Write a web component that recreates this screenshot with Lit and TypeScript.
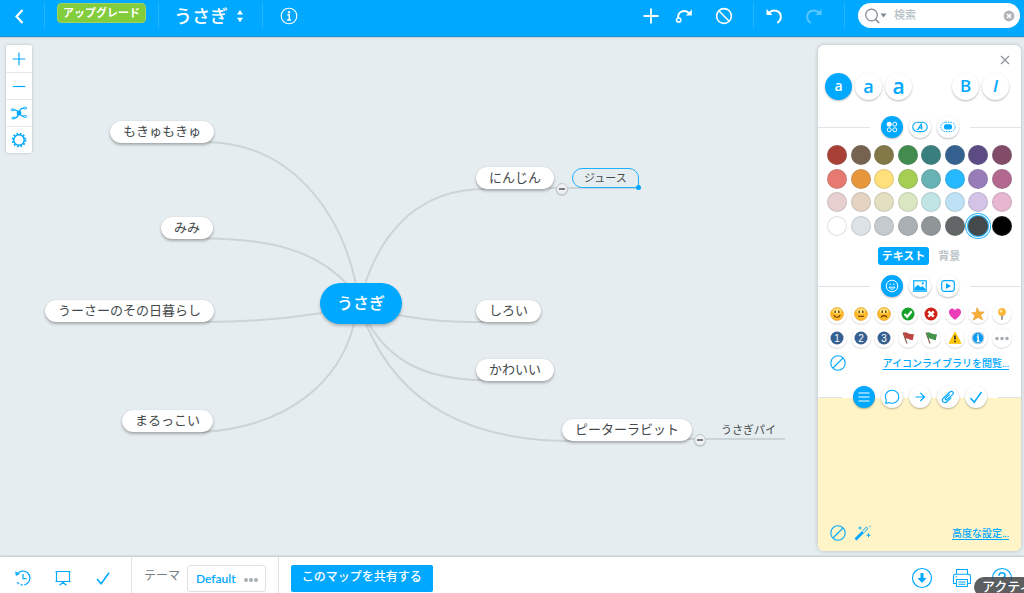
import { LitElement, html, css, svg, TemplateResult } from "lit";
import { customElement, state } from "lit/decorators.js";
import { classMap } from "lit/directives/class-map.js";
import { styleMap } from "lit/directives/style-map.js";

type Drawing = ReturnType<typeof svg>;

const icon = (w: number, h: number, body: Drawing): TemplateResult =>
  html`<svg class="icon" width=${w} height=${h} viewBox="0 0 ${w} ${h}" aria-hidden="true">${body}</svg>`;

const icons = {
  back: icon(10, 16, svg`<path d="M8.500 2L2.500 8.500L8.500 15" stroke-width="2.200"/>`),
  updown: icon(8, 16, svg`<path class="solid" d="M1 6.500L4 2L7 6.500ZM1 9.800L4 14.300L7 9.800Z"/>`),
  info: icon(18, 18, svg`<circle cx="9" cy="9" r="7.800" stroke-width="1.100"/><circle class="solid" cx="9" cy="5.200" r="1.200"/><path d="M7.500 7.800H9.300V12.700M7.200 12.900H11" stroke-width="1.500"/>`),
  add: icon(16, 16, svg`<path d="M8 .5V15.500M.5 8H15.500" stroke-width="1.800"/>`),
  relation: icon(18, 16, svg`<circle cx="3.700" cy="12" r="2.100" stroke-width="1.500"/><path d="M3.300 10C2.300 3.500 9.500 1 14.200 5.200" stroke-width="1.900"/><path class="solid" d="M16.800 1.500V7.600H10.800Z"/>`),
  ban: icon(18, 18, svg`<circle cx="9" cy="9" r="7.400" stroke-width="1.600"/><path d="M3.800 3.800L14.200 14.200" stroke-width="1.500"/>`),
  undo: icon(18, 18, svg`<path d="M4.200 5.600C9 1.200 15.800 4.400 15.800 9.600C15.800 12.500 14.300 14.700 12.300 15.800" stroke-width="1.900"/><path class="solid" d="M1.500 2V8H7.500Z"/>`),
  redo: icon(18, 18, svg`<path d="M13.800 5.600C9 1.200 2.200 4.400 2.200 9.600C2.200 12.500 3.700 14.700 5.700 15.800" stroke-width="1.900"/><path class="solid" d="M16.500 2V8H10.500Z"/>`),
  search: icon(24, 16, svg`<circle cx="7.500" cy="7" r="5.800" stroke-width="1.200"/><path d="M11.500 11.200L15.200 15" stroke-width="1.500"/><path class="solid" d="M16.500 5.500H22.500L19.500 9.500Z"/>`),
  clear: icon(12, 12, svg`<circle class="solid" cx="6" cy="6" r="5.400"/><path d="M4 4L8 8M8 4L4 8" stroke="#fff" stroke-width="1.600"/>`),
  zoomIn: icon(14, 14, svg`<path d="M7 .8V13.200M.8 7H13.200" stroke-width="1.200"/>`),
  zoomOut: icon(14, 14, svg`<path d="M.8 7.500H13.200" stroke-width="1.200"/>`),
  layout: icon(18, 14, svg`<circle class="solid" cx="9" cy="7" r="2.400"/><path d="M3.800 3.800C7 3.500 7.600 5 9 7C10.300 9.300 11 10.500 14 10.500M4.500 12C8 11.800 8 9 9 7C9.500 4 10 2.500 13.800 2.200" stroke-width="1.300"/><rect x="1.200" y="2.900" width="3" height="1.800" rx=".9"/><rect x="2" y="11.200" width="3" height="1.800" rx=".9"/><rect x="13.600" y="1.200" width="3" height="1.800" rx=".9"/><rect x="13.600" y="9.600" width="3" height="1.800" rx=".9"/>`),
  gear: icon(16, 16, svg`<circle cx="8" cy="8" r="5.200" stroke-width="1.500"/><circle cx="8" cy="8" r="6.500" stroke-width="1.700" stroke-dasharray="1.700 1.703"/>`),
  close: icon(10, 10, svg`<path d="M1 1L9 9M9 1L1 9" stroke-width="1.300"/>`),
  shapes: icon(12, 12, svg`<circle class="solid" cx="3.200" cy="3.200" r="2.500"/><circle cx="8.800" cy="3.200" r="2"/><circle cx="3.200" cy="8.800" r="2"/><circle cx="8.800" cy="8.800" r="2"/>`),
  textShape: icon(16, 12, svg`<rect x=".8" y="1.200" width="14.400" height="9.400" rx="4.700" stroke-width="1.100"/><path d="M4.500 8.500H5.800L9.200 3.200L10 8.500M6.300 6.800H9.600" stroke-width="1.200"/>`),
  boundary: icon(16, 12, svg`<rect x=".8" y="1.200" width="14.400" height="9.400" rx="4.700" stroke-dasharray="1.500 1"/><rect class="solid" x="4" y="3.200" width="8" height="5.400" rx="2"/>`),
  smile: icon(14, 14, svg`<circle cx="7" cy="7" r="5.800"/><path d="M4 8.200C5 10.800 9 10.800 10 8.200Z" stroke-width=".9"/><path d="M5.200 4.500V6M8.800 4.500V6" stroke-width="1"/>`),
  image: icon(14, 12, svg`<rect x=".8" y=".8" width="12.400" height="10.400" stroke-width="1.200"/><path class="solid" d="M1.500 10V8L5 4.800L7.500 7.300L9.300 6L12.500 9V10.500H1.500Z"/><circle class="solid" cx="9.800" cy="3.400" r="1.100"/>`),
  video: icon(14, 12, svg`<rect x=".7" y=".7" width="12.600" height="10.600" rx="2.500" stroke-width="1.200"/><path class="solid" d="M5 3V9L10 6Z"/>`),
  none: icon(16, 16, svg`<circle cx="8" cy="8" r="7.200" stroke-width="1.100"/><path d="M13 3L3 13" stroke-width="1.100"/>`),
  lines: icon(12, 10, svg`<path d="M.5 1H11.500M.5 5H11.500M.5 9H11.500" stroke-width="1.100"/>`),
  bubble: icon(16, 16, svg`<path d="M1.800 14.200L2.300 11C-.5 6 3.300 1.200 8 1.200C11.800 1.200 14.800 4 14.800 7.700C14.800 12.500 9.500 15.700 5 13.600Z" stroke-width="1.100"/>`),
  arrow: icon(12, 12, svg`<path d="M1.500 6H10.300M6.300 1.800L10.500 6L6.300 10.200" stroke-width="1.200"/>`),
  clip: icon(14, 14, svg`<path d="M8.700 4.300L4.600 8.400C3.600 9.400 4.900 10.500 5.800 9.600L11.600 4.600C13.600 2.500 11 .2 8.900 2L2.300 8.200C-.3 10.900 3.200 14.200 5.900 11.800L10.300 7.600" stroke-width="1.200"/>`),
  check: icon(14, 14, svg`<path d="M1.500 8L5.200 12.200L12.500 2" stroke-width="1.500"/>`),
  wand: icon(18, 16, svg`<path d="M1.500 14.500L9 7" stroke-width="2.800"/><path d="M8.600 5.800L12.400 2L14 3.600L10.200 7.400" stroke-width="1"/><path d="M6 1.500V4.500M4.500 3H7.500M14.500 8.200V12.200M12.500 10.200H16.500M16 .8V2.200" stroke-width="1"/>`),
  history: icon(18, 18, svg`<path d="M3.200 5A7 7 0 1 1 3.200 13" stroke-width="1.200" stroke-dasharray="27 1.500 2 1.500"/><path class="solid" d="M1 2.500L2 7L6 4.700Z"/><path d="M9 5V9.700H12.500" stroke-width="1.200"/>`),
  screen: icon(18, 16, svg`<path d="M1.500 1.500H16.500M2.500 1.500V11.500M15.500 1.500V11.500M1.500 11.500H16.500M9 11.500V14M9 12.500L5.500 15.200M9 12.500L12.500 15.200" stroke-width="1.200"/>`),
  download: icon(22, 22, svg`<circle cx="11" cy="11" r="9.500" stroke-width="1.200"/><path d="M11 6V13" stroke-width="3"/><path class="solid" d="M6.500 11H15.500L11 16Z"/>`),
  printer: icon(20, 20, svg`<path d="M4.500 6V1.500H15.500V6M4.500 15.500H1.500V8C1.500 6.800 2.200 6.200 3.200 6.200H16.800C17.800 6.200 18.500 6.800 18.500 8V15.500H15.500M4.500 11.500H15.500V18.500H4.500ZM6.500 14H13.500M6.500 16.200H13.500M3.500 8.800H5" stroke-width="1.100"/>`),
  help: icon(22, 22, svg`<circle cx="11" cy="11" r="9.500" stroke-width="1.200"/><path d="M8 8.800C8 4.800 14 4.800 14 8.500C14 10.800 11 10.600 11 13.200M11 14.800V16.500" stroke-width="1.700"/>`),
};

const taskCheck = icon(16, 16, svg`<path d="M2 9L6.200 13.800L14 2.800" stroke-width="1.600"/>`);

const face = (mouth: string): Drawing => svg`<circle cx="8" cy="8" r="6.500" fill="#fdb92a" stroke="#e89b1c" stroke-width=".6"/><ellipse cx="8" cy="5" rx="4.300" ry="2.600" fill="#ffe680" stroke="none"/><path d="M6.200 4.500V7M9.800 4.500V7" stroke="#5b3200" stroke-width="1.300"/><path d=${mouth} stroke="#6b3c00" stroke-width="1.100"/>`;
const digit = (n: string): Drawing => svg`<circle cx="8" cy="8" r="6.500" fill="#35608f" stroke="none"/><text class="digit" x="8" y="11.500" text-anchor="middle">${n}</text>`;
const flag = (color: string): Drawing => svg`<path d="M3 2.500L7 13.500" stroke="#7d5b4a" stroke-width="1.100"/><path d="M3.500 3C6 .8 7.500 4.800 14 4.200L12.800 10C9 10.500 8 7.300 5.600 9Z" fill=${color} stroke="none"/>`;

const stickers: [string, Drawing][] = [
  ["笑顔", face("M4.800 9C6 12 10 12 11.200 9")],
  ["普通", face("M5 10.300H11")],
  ["悲しい", face("M5 11.500C6 9 10 9 11 11.500")],
  ["完了", svg`<circle cx="8" cy="8" r="6.500" fill="#16a02c" stroke="none"/><path d="M4.500 8L7.200 10.800L11.700 5.300" stroke="#fff" stroke-width="2.200"/>`],
  ["中止", svg`<circle cx="8" cy="8" r="6.500" fill="#cf2218" stroke="none"/><path d="M5.300 5.300L10.700 10.700M10.700 5.300L5.300 10.700" stroke="#fff" stroke-width="2.400"/>`],
  ["ハート", svg`<path d="M8 13.800C-1.500 7.500 2.500 2.500 5 2.500C6.800 2.500 7.600 3.700 8 4.600C8.400 3.700 9.200 2.500 11 2.500C13.500 2.500 17.500 7.500 8 13.800Z" fill="#ea3db6" stroke="none"/>`],
  ["星", svg`<path d="M7 1.500L9.300 5.800L14.300 6L10.700 9.300L12.800 14L8.200 11.500L3 14.300L4.900 9.300L1.500 6.800L6 6.200Z" fill="#f6ad35" stroke="#e7952b" stroke-width=".5"/>`],
  ["電球", svg`<circle cx="8" cy="6" r="3.900" fill="#fbb73d" stroke="none"/><circle cx="7" cy="5" r="1.500" fill="#ffe29b" stroke="none"/><path d="M8 9.500V13.800" stroke="#a6a29b" stroke-width="2"/>`],
  ["優先度1", digit("1")],
  ["優先度2", digit("2")],
  ["優先度3", digit("3")],
  ["赤い旗", flag("#b9463f")],
  ["緑の旗", flag("#43934c")],
  ["警告", svg`<path d="M8 2L14 13.300H2Z" fill="#fdc70e" stroke="#fdc70e" stroke-width="1" stroke-linejoin="round"/><path d="M8 5.500V9.500M8 10.800V12.300" stroke="#2b2b2b" stroke-width="1.600"/>`],
  ["情報", svg`<circle cx="8" cy="8" r="5.700" fill="#0a9bf5" stroke="#a9c6dc" stroke-width="1.200"/><path d="M8 4.300V5.700M6.800 7H8.200V11M6.800 11.200H9.500" stroke="#fff" stroke-width="1.400"/>`],
  ["その他", svg`<g fill="#a3aaaf" stroke="none"><circle cx="3" cy="8.500" r="1.700"/><circle cx="8" cy="8.500" r="1.700"/><circle cx="13" cy="8.500" r="1.700"/></g>`],
];

const palette = [
  "#a94036", "#75624f", "#817845", "#428c4f", "#3a7f80", "#34618f", "#5c4c83", "#824b67",
  "#e67a70", "#e6963b", "#ffe07a", "#a5ce52", "#67b2b4", "#26b9ff", "#987cb8", "#b2688f",
  "#e8cfd0", "#e5d4c2", "#e4dfc0", "#dae6c2", "#c1e5e5", "#bfe1f5", "#d4c3e7", "#e7b6d0",
  "#ffffff", "#dce2e6", "#c4cacd", "#aab0b3", "#909598", "#626667", "#44494b", "#000000",
];

interface MapNode { text: string; x: number; y: number; kind: "root" | "topic" | "leaf" | "leaf selected"; }

const nodes: MapNode[] = [
  { text: "うさぎ", x: 320, y: 246, kind: "root" },
  { text: "もきゅもきゅ", x: 110, y: 84, kind: "topic" },
  { text: "みみ", x: 161, y: 180, kind: "topic" },
  { text: "うーさーのその日暮らし", x: 45, y: 263, kind: "topic" },
  { text: "まるっこい", x: 122, y: 373, kind: "topic" },
  { text: "にんじん", x: 476, y: 130, kind: "topic" },
  { text: "しろい", x: 476, y: 263, kind: "topic" },
  { text: "かわいい", x: 476, y: 322, kind: "topic" },
  { text: "ピーターラビット", x: 562, y: 382, kind: "topic" },
  { text: "ジュース", x: 572, y: 131, kind: "leaf selected" },
  { text: "うさぎパイ", x: 710, y: 384, kind: "leaf" },
];

const branches = [
  "M206 105C290 106 340 173 356 247",
  "M206 201.500C270 202 315 213 347 247",
  "M206 285C250 285 290 281 322 276",
  "M202 395C290 390 340 343 354 287",
  "M485 152C420 152 383 193 365 247",
  "M398 278C430 284 450 285 484 285",
  "M369 287C390 323 425 343 484 343",
  "M366 287C400 368 470 404 572 404",
  "M540 151H638",
  "M680 402H785",
];

@customElement("app-root")
export class AppRoot extends LitElement {
  @state() private color = 30;
  @state() private query = "";

  static styles = css`
    :host {
      display: flex; flex-direction: column; position: relative;
      height: 100vh; overflow: hidden; color: #44494b; background: #e6edf0;
      font-family: Lato, "Noto Sans CJK JP", sans-serif; font-size: 12px; line-height: 16px;
    }
    * { box-sizing: border-box; }
    button, input { font: inherit; margin: 0; padding: 0; border: 0; background: none; color: inherit; }
    button { display: flex; align-items: center; justify-content: center; cursor: pointer; }
    .icon { display: block; fill: none; stroke: currentColor; flex: none; }
    .solid { fill: currentColor; stroke: none; }
    .spacer { flex: 1; }

    .top {
      display: flex; align-items: center; height: 37px; padding: 0 4px 5px 0; flex: none;
      color: #fff; background: #00a8ff; border-bottom: 1px solid #1590d6;
      box-shadow: 0 1px 2px rgba(0, 0, 0, .15); z-index: 1;
    }
    .tool { width: 40px; height: 26px; }
    .narrow { width: 26px; }
    .before { margin-right: 9px; }
    .back { width: 44px; padding-right: 6px; }
    .after { margin-right: 10px; }
    .sep { width: 1px; height: 25px; background: #27b4fe; }
    .faded { opacity: .35; }
    .upgrade {
      height: 20px; margin: 3px 12px 0; padding: 0 5px 1px; border: 1px solid #9bd36a; border-radius: 4px;
      background: #83cc3c; font-size: 11px; font-weight: 700; align-self: flex-start;
    }
    .title { gap: 8px; padding: 0 18px 0 15px; font-size: 18px; line-height: 26px; font-weight: 500; }
    .info { width: 52px; }
    .search {
      display: flex; align-items: center; width: 162px; height: 25px; margin-left: 13px; padding: 0 5px 0 6px;
      border-radius: 13px; background: #fff; color: #7e888e;
    }
    .search input { flex: 1; min-width: 0; padding: 0 0 2px 6px; font-size: 11px; outline: 0; }
    .search input::placeholder { color: #b4bfc5; opacity: 1; font-weight: 500; }
    .search button { color: #b2b6b9; }

    .canvas { position: relative; flex: 1; min-height: 0; overflow: hidden; }
    .branches { position: absolute; inset: 0; width: 100%; height: 100%; fill: none; stroke: #cdd4d7; stroke-width: 2; }
    .node { position: absolute; white-space: nowrap; }
    .topic {
      padding: 2px 13px 4px; border-radius: 11px; background: #fff; font-size: 13px;
      box-shadow: 0 2px 3px rgba(0, 0, 0, .28), 0 0 1px rgba(0, 0, 0, .2);
    }
    .root {
      padding: 8px 17px 9px; border-radius: 21px; background: #00a8ff; color: #fff; font-size: 16px;
      line-height: 24px; font-weight: 500; box-shadow: 0 2px 3px rgba(0, 0, 0, .25);
    }
    .leaf { padding: 1px 11px 3px; font-size: 11px; }
    .selected { padding-bottom: 1px; border: 1px solid #1fb0fb; border-radius: 10px 10px 0 10px; }
    .handle { position: absolute; right: -3px; bottom: -3px; width: 5px; height: 5px; border-radius: 50%; background: #00a8ff; }
    .fold {
      position: absolute; width: 12px; height: 12px; border: 1px solid #c3c8ca; border-radius: 50%;
      background: #eff1f2; box-shadow: 0 1px 1px rgba(0, 0, 0, .15);
    }
    .fold::before { content: ""; width: 6px; height: 2px; background: #777c7e; }

    .zoom {
      position: absolute; left: 6px; top: 8px; width: 26px; padding-top: 1px; color: #00a8ff;
      background: #fff; border-radius: 2px; box-shadow: 0 0 3px rgba(0, 0, 0, .22);
    }
    .zoom button { width: 26px; height: 27px; border-bottom: 1px solid #e3e8ea; }
    .zoom button:last-child { border: 0; height: 26px; }

    .panel {
      position: absolute; right: 3px; top: 8px; bottom: 6px; width: 203px; display: flex; flex-direction: column;
      background: #fff; border-radius: 6px; box-shadow: 0 0 4px rgba(0, 0, 0, .22); color: #00a8ff; overflow: hidden;
    }
    .close { align-self: flex-end; width: 20px; height: 20px; margin: 5px 6px 3px 0; color: #8d969b; }
    .fonts { display: flex; align-items: center; gap: 3px; padding: 0 12px 0 7px; font-family: "Open Sans", sans-serif; font-weight: 600; }
    .round { width: 27px; height: 27px; border-radius: 50%; background: #fff; box-shadow: 0 1px 2px rgba(0, 0, 0, .28); flex: none; }
    .small { width: 22px; height: 22px; }
    .on { background: #00a8ff; color: #fff; }
    .s1 { font-size: 14px; } .s2 { font-size: 18px; } .s3 { font-size: 21px; } .s4 { font-size: 17px; }
    .s1, .s2, .s3 { padding-bottom: 2px; }
    .s4 { padding-bottom: 1px; }
    .italic { font-style: italic; }
    .tabs { display: flex; align-items: center; gap: 6px; margin-top: 16px; flex: none; }
    .tabs::before, .tabs::after { content: ""; flex: 1; height: 1px; margin-right: 5px; background: #dfe4e6; }
    .tabs::after { margin: 0 0 0 5px; }
    .swatches, .stickers { display: grid; grid-template-columns: repeat(8, 20px); justify-content: space-between; padding: 0 9px; }
    .swatches { height: 91px; align-content: space-between; margin-top: 7px; }
    .swatch {
      appearance: none; width: 20px; height: 20px; border-radius: 50%; border: 1px solid rgba(110, 120, 125, .22);
      cursor: pointer;
    }
    .swatch:checked { border: 0; box-shadow: 0 0 0 1px #2fb4fb, 0 0 0 2px #fff, 0 0 0 3px #2fb4fb; }
    .modes { display: flex; justify-content: center; gap: 9px; margin-top: 11px; padding-right: 1px; font-size: 11px; font-weight: 700; }
    .modes button { height: 18px; padding-bottom: 1px; color: #bac2c6; }
    .modes .on { padding: 0 4px 1px; border-radius: 3px; color: #fff; }
    .media { margin-top: 10px; }
    .stickers { row-gap: 4px; margin-top: 7px; }
    .sticker { width: 20px; height: 20px; border-radius: 50%; box-shadow: 0 1px 1px rgba(0, 0, 0, .12), 0 0 1px rgba(0, 0, 0, .1); }
    .digit { fill: #fff; stroke: none; font: 10px "Liberation Sans", sans-serif; }
    .line { display: flex; align-items: center; gap: 8px; padding: 0 12px; }
    .library { margin-top: 7px; }
    .details { margin-top: 15px; }
    a { color: #00a8ff; font-size: 10px; font-weight: 500; text-decoration: underline; text-underline-offset: 2px; white-space: nowrap; }
    .note { flex: 1; display: flex; flex-direction: column; justify-content: flex-end; margin-top: -10px; padding-bottom: 10px; background: #fff4c8; }
    .details { position: relative; }

    .bottom {
      display: flex; align-items: center; height: 36px; padding: 0 2px 0 3px; flex: none; color: #00a8ff;
      background: #fff; box-shadow: 0 -1px 2px rgba(0, 0, 0, .18); z-index: 1;
    }
    .action { width: 40px; height: 32px; margin-top: 5px; }
    .rule { width: 1px; align-self: stretch; background: #dfe4e6; margin: 0 12px 0 8px; }
    .rule2 { margin-left: 12px; }
    .caption { color: #777e82; margin-top: 2px; }
    .theme {
      height: 27px; margin: 7px 0 0 7px; padding: 0 6px 0 8px; gap: 7px; border: 1px solid #dce1e3; border-radius: 3px;
      font-size: 12px; font-weight: 600;
    }
    .dots { color: #a8afb3; }
    .share { height: 27px; margin-top: 6px; padding: 0 11px 2px; border-radius: 2px; background: #00a8ff; color: #fff; font-weight: 500; }
    .status {
      position: absolute; right: -20px; bottom: -4px; width: 70px; padding: 0 8px 2px; border-radius: 10px;
      z-index: 2; background: rgba(70, 72, 74, .88); color: #fff; font-size: 13px; font-weight: 500; line-height: 18px; white-space: nowrap;
    }
  `;

  private tool(name: string, drawing: TemplateResult, cls: string) {
    return html`<button class=${cls} aria-label=${name}>${drawing}</button>`;
  }

  private header() {
    return html`<header class="top">
      ${this.tool("戻る", icons.back, "tool back")}
      <span class="sep"></span>
      <button class="upgrade">アップグレード</button>
      <span class="sep"></span>
      <button class="title">うさぎ ${icons.updown}</button>
      <span class="sep"></span>
      ${this.tool("情報", icons.info, "tool info")}
      <span class="spacer"></span>
      ${this.tool("追加", icons.add, "tool narrow")}
      ${this.tool("関連線", icons.relation, "tool")}
      ${this.tool("削除", icons.ban, "tool before")}
      <span class="sep"></span>
      ${this.tool("元に戻す", icons.undo, "tool")}
      ${this.tool("やり直す", icons.redo, "tool after faded")}
      <span class="sep"></span>
      <label class="search">
        ${icons.search}
        <input type="text" aria-label="検索" placeholder="検索" .value=${this.query}
          @input=${(e: Event) => (this.query = (e.target as HTMLInputElement).value)} />
        <button aria-label="クリア" @click=${() => (this.query = "")}>${icons.clear}</button>
      </label>
    </header>`;
  }

  private map() {
    return html`
      <svg class="branches" aria-hidden="true">${branches.map((d) => svg`<path d=${d}/>`)}</svg>
      ${nodes.map((n) => html`<div class="node ${n.kind}" style=${styleMap({ left: `${n.x}px`, top: `${n.y}px` })}>
        ${n.text}${n.kind.includes("selected") ? html`<span class="handle"></span>` : ""}
      </div>`)}
      ${[[556, 146], [694, 397]].map(([x, y]) => html`<button class="fold" aria-label="折りたたむ"
        style=${styleMap({ left: `${x}px`, top: `${y}px` })}></button>`)}`;
  }

  private panel() {
    return html`<aside class="panel">
      ${this.tool("閉じる", icons.close, "close")}
      <div class="fonts">
        <button class="round on s1">a</button><button class="round s2">a</button><button class="round s3">a</button>
        <span class="spacer"></span>
        <button class="round s4">B</button><button class="round s4 italic">I</button>
      </div>
      <div class="tabs">
        ${this.tool("スタイル", icons.shapes, "round small on")}
        ${this.tool("トピック", icons.textShape, "round small")}
        ${this.tool("境界", icons.boundary, "round small")}
      </div>
      <div class="swatches" role="radiogroup" aria-label="色">
        ${palette.map((c, i) => html`<input class="swatch" type="radio" name="color" aria-label=${c}
          .checked=${i === this.color} @change=${() => (this.color = i)} style=${styleMap({ backgroundColor: c })} />`)}
      </div>
      <div class="modes"><button class=${classMap({ on: true })}>テキスト</button><button>背景</button></div>
      <div class="tabs media">
        ${this.tool("アイコン", icons.smile, "round small on")}
        ${this.tool("画像", icons.image, "round small")}
        ${this.tool("動画", icons.video, "round small")}
      </div>
      <div class="stickers">
        ${stickers.map(([name, d]) => this.tool(name, icon(16, 16, d), "sticker"))}
      </div>
      <div class="line library">
        ${this.tool("アイコンなし", icons.none, "plain")}
        <span class="spacer"></span><a href="#library">アイコンライブラリを閲覧...</a>
      </div>
      <div class="tabs details">
        ${this.tool("メモ", icons.lines, "round small on")}
        ${this.tool("コメント", icons.bubble, "round small")}
        ${this.tool("リンク", icons.arrow, "round small")}
        ${this.tool("添付", icons.clip, "round small")}
        ${this.tool("タスク", icons.check, "round small")}
      </div>
      <div class="note">
        <div class="line">
          ${this.tool("メモなし", icons.none, "plain")}
          ${this.tool("書式", icons.wand, "plain")}
          <span class="spacer"></span><a href="#advanced">高度な設定...</a>
        </div>
      </div>
    </aside>`;
  }

  render() {
    return html`
      ${this.header()}
      <main class="canvas">
        ${this.map()}
        <nav class="zoom">
          ${this.tool("拡大", icons.zoomIn, "")}
          ${this.tool("縮小", icons.zoomOut, "")}
          ${this.tool("自動レイアウト", icons.layout, "")}
          ${this.tool("設定", icons.gear, "")}
        </nav>
        ${this.panel()}
      </main>
      <footer class="bottom">
        ${this.tool("履歴", icons.history, "action")}
        ${this.tool("プレゼンテーション", icons.screen, "action")}
        ${this.tool("タスク", taskCheck, "action")}
        <span class="rule"></span>
        <span class="caption">テーマ</span>
        <button class="theme">Default <span class="dots">${icon(16, 6, svg`<circle class="solid" cx="3" cy="4" r="2"/><circle class="solid" cx="8" cy="4" r="2"/><circle class="solid" cx="13" cy="4" r="2"/>`)}</span></button>
        <span class="rule rule2"></span>
        <button class="share">このマップを共有する</button>
        <span class="spacer"></span>
        ${this.tool("ダウンロード", icons.download, "action")}
        ${this.tool("印刷", icons.printer, "action")}
        ${this.tool("ヘルプ", icons.help, "action")}
      </footer>
      <div class="status">アクティ</div>`;
  }
}
